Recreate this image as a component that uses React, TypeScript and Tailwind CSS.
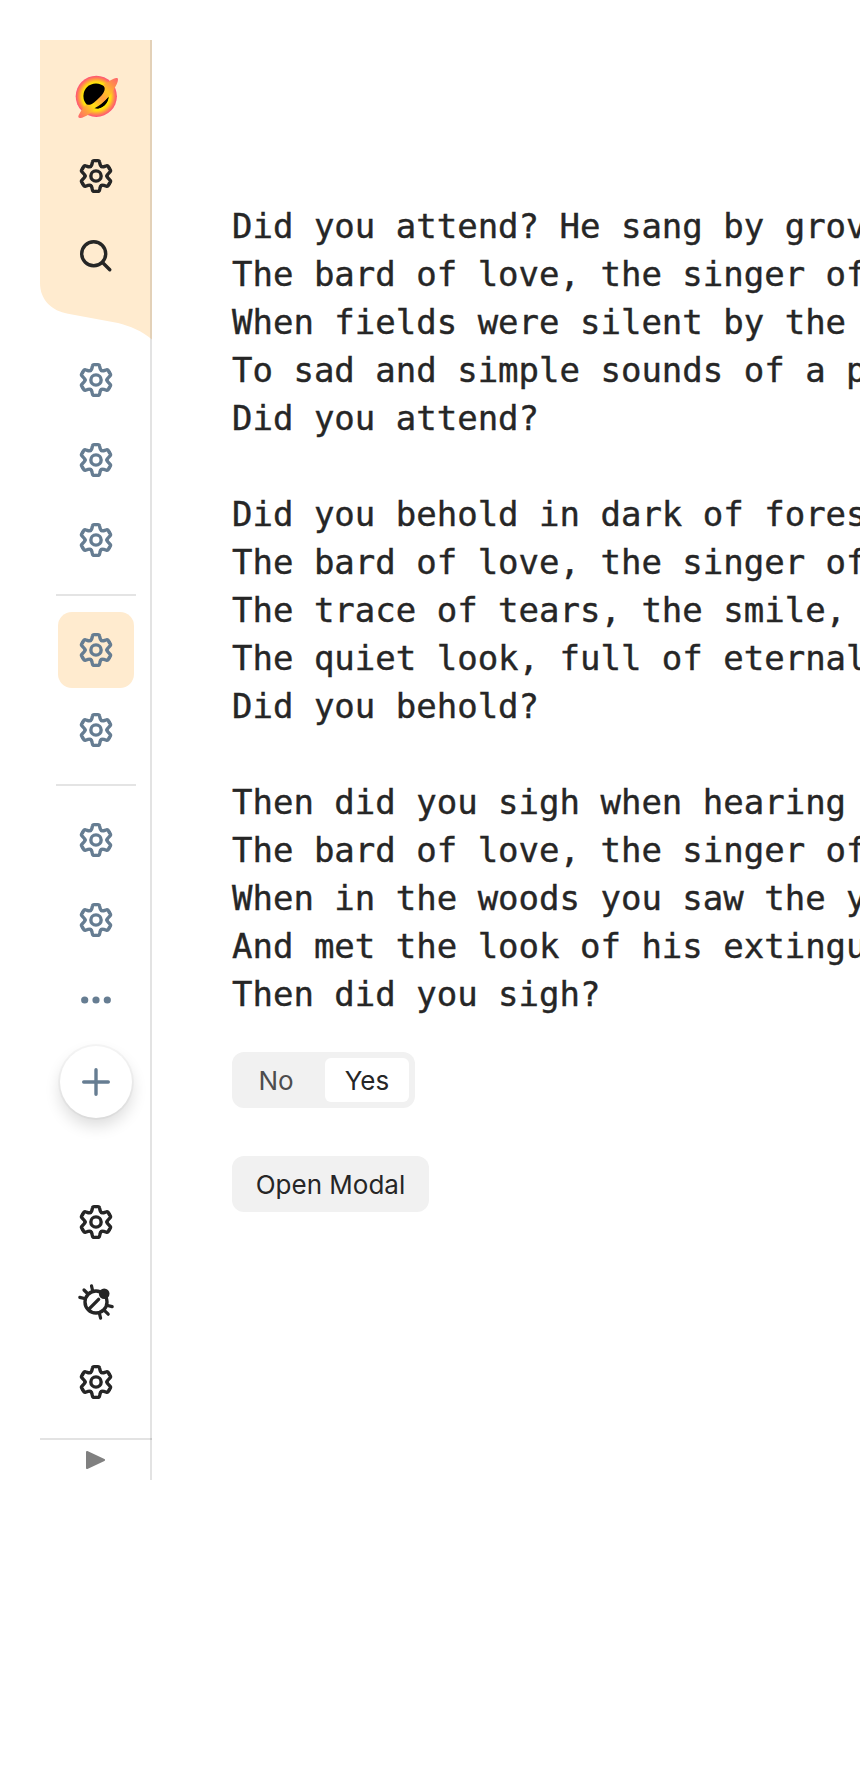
import type { ReactNode } from "react";

const halfTooth = "M0-15.4H1.9Q3.3-15.4 3.55-14L3.9-12.4C4.1-11.3 4.4-10.2 5.45-9.45";

function Icon({ children }: { children: ReactNode }) {
  return (
    <svg
      className="size-12"
      viewBox="-24 -24 48 48"
      fill="none"
      stroke="currentColor"
      strokeWidth="3.4"
      strokeLinecap="round"
      strokeLinejoin="round"
    >
      {children}
    </svg>
  );
}

function Gear() {
  return (
    <Icon>
      {[0, 60, 120, 180, 240, 300].map((angle) => (
        <g key={angle} transform={`rotate(${angle})`}>
          <path d={halfTooth} />
          <path d={halfTooth} transform="scale(-1 1)" />
        </g>
      ))}
      <circle r="5.15" />
    </Icon>
  );
}

function Search() {
  return (
    <Icon>
      <circle cx="-2.3" cy="-2.3" r="12" />
      <path d="M6.8 6.8L13.8 13.8" />
    </Icon>
  );
}

function Bug() {
  return (
    <Icon>
      <circle r="11" />
      <circle cx="8.2" cy="-8.2" r="5.3" fill="currentColor" stroke="none" />
      <path d="M-6.6 6.6L2.6-2.6" />
      <path
        strokeWidth="3.2"
        d="M-3.2-10.5L-4.5-16.2M-8-8L-12-12M-10.5-3.2L-16.2-4.6M10.5 3.2L16.2 4.6M8.3 8.3L12.2 12.2M3.2 10.5L4.6 16.2"
      />
    </Icon>
  );
}

function Dots() {
  return (
    <svg className="size-12" viewBox="-24 -24 48 48" fill="currentColor">
      <circle cx="-11.3" r="3.6" />
      <circle r="3.6" />
      <circle cx="11.3" r="3.6" />
    </svg>
  );
}

function Logo() {
  return (
    <svg className="size-12" viewBox="-24 -24 48 48">
      <defs>
        <radialGradient id="halo" gradientUnits="userSpaceOnUse" cx="0.3" cy="0.3" r="20.6">
          <stop offset="0.6" stopColor="#fff200" />
          <stop offset="0.72" stopColor="#ffd21a" />
          <stop offset="0.86" stopColor="#ff8a4d" />
          <stop offset="1" stopColor="#ff4f79" />
        </radialGradient>
        <linearGradient id="disc" gradientUnits="userSpaceOnUse" x1="-18" y1="21" x2="22" y2="-17">
          <stop offset="0" stopColor="#ff6670" />
          <stop offset="0.18" stopColor="#ff9c40" />
          <stop offset="0.34" stopColor="#ffe011" />
          <stop offset="0.55" stopColor="#ff9c40" />
          <stop offset="0.7" stopColor="#ffc322" />
          <stop offset="0.85" stopColor="#ff9048" />
          <stop offset="1" stopColor="#ff6670" />
        </linearGradient>
      </defs>
      <circle cx="0.3" cy="0.3" r="20.6" fill="url(#halo)" />
      <circle r="12.6" fill="#000" />
      <path
        fill="url(#disc)"
        d="M20.5-17.9C17-18 13-14 7-11C10-8 9-4 4 1C-1 6-5 10-9 8.5C-12 10-14.5 14-17 18.500C-18.500 21-17.500 22.300-15.500 22C-11 21.500-7 18-2 14.500C6 9 15 0 19.500-9.500C20.500-11.500 22-14 22-16.500C22-17.400 21.400-17.900 20.500-17.900Z"
      />
      <path fill="#000" d="M12.5 1C12 7.5 6.5 12.5 0.5 12.5L-1.5 12.2C4 9.5 8 6 12.5 1Z" />
    </svg>
  );
}

function Item({ children, active }: { children: ReactNode; active?: boolean }) {
  return (
    <div className="flex h-20 w-28 shrink-0 items-center justify-center">
      <button
        className={
          active
            ? "flex size-[76px] items-center justify-center rounded-[14px] bg-[#ffebcf]"
            : "flex size-[76px] items-center justify-center"
        }
      >
        {children}
      </button>
    </div>
  );
}

function Separator() {
  return <div className="my-3.5 h-0.5 w-20 shrink-0 bg-[#e4e4e4]" />;
}

const poem = `Did you attend? He sang by grov
The bard of love, the singer of
When fields were silent by the
To sad and simple sounds of a p
Did you attend?

Did you behold in dark of fores
The bard of love, the singer of
The trace of tears, the smile,
The quiet look, full of eternal
Did you behold?

Then did you sigh when hearing
The bard of love, the singer of
When in the woods you saw the y
And met the look of his extingu
Then did you sigh?`;

export default function App() {
  return (
    <div className="flex h-[1768px] w-[860px] overflow-hidden bg-white pt-10 pl-10 text-[#262626]">
      <aside className="relative isolate flex h-[1440px] w-28 shrink-0 flex-col items-center">
        <svg className="absolute top-0 left-0 -z-10 h-[300px] w-28" viewBox="0 0 112 300">
          <path
            fill="#ffebcf"
            d="M0 0H112V299.5C102 291 90 286 78 283L28 273.7C12 271 0 260 0 243Z"
          />
        </svg>
        <div className="pointer-events-none absolute top-0 right-0 h-full w-0.5 bg-black/[0.11]" />

        <div className="flex h-[300px] shrink-0 flex-col pt-4">
          <Item><Logo /></Item>
          <Item><Gear /></Item>
          <Item><Search /></Item>
        </div>

        <nav className="flex flex-col items-center text-[#667d92]">
          <Item><Gear /></Item>
          <Item><Gear /></Item>
          <Item><Gear /></Item>
          <Separator />
          <Item active><Gear /></Item>
          <Item><Gear /></Item>
          <Separator />
          <Item><Gear /></Item>
          <Item><Gear /></Item>
          <Item><Dots /></Item>
          <button className="mt-1.5 flex size-[72px] shrink-0 items-center justify-center rounded-full bg-white shadow-[0_0_0_2px_rgba(0,0,0,0.03),0_8px_16px_rgba(0,0,0,0.14)]">
            <Icon>
              <path d="M-12.3 0H12.3M0-12.3V12.3" />
            </Icon>
          </button>
        </nav>

        <div className="mt-16 flex shrink-0 flex-col">
          <Item><Gear /></Item>
          <Item><Bug /></Item>
          <Item><Gear /></Item>
        </div>

        <div className="mt-4 flex h-[42px] w-28 shrink-0 justify-center border-t-2 border-black/[0.11] pt-[11px]">
          <svg className="h-[18px] w-5" viewBox="0 0 20 18">
            <path
              d="M1 1L18 9L1 17Z"
              fill="#808080"
              stroke="#808080"
              strokeWidth="2"
              strokeLinejoin="round"
            />
          </svg>
        </div>
      </aside>

      <main className="flex flex-col items-start pt-[162px] pl-20">
        <p className="font-['DejaVu_Sans_Mono',monospace] text-[34px] leading-[48px] whitespace-pre [-webkit-text-stroke:0.4px_#262626]">
          {poem}
        </p>

        <div className="mt-[34px] flex h-14 w-[183px] rounded-xl bg-[#f1f1f1] p-1.5 font-[Inter,sans-serif] text-[26px] leading-[44px]">
          <button className="w-[87px] pt-px pr-[11px] text-center text-[#4d4d4d]">No</button>
          <button className="w-[84px] rounded-md bg-white pt-px text-center">Yes</button>
        </div>

        <button className="mt-12 h-14 w-[197px] rounded-xl bg-[#f1f1f1] pt-px text-center font-[Inter,sans-serif] text-[26px] leading-[55px] whitespace-nowrap">
          Open Modal
        </button>
      </main>
    </div>
  );
}
